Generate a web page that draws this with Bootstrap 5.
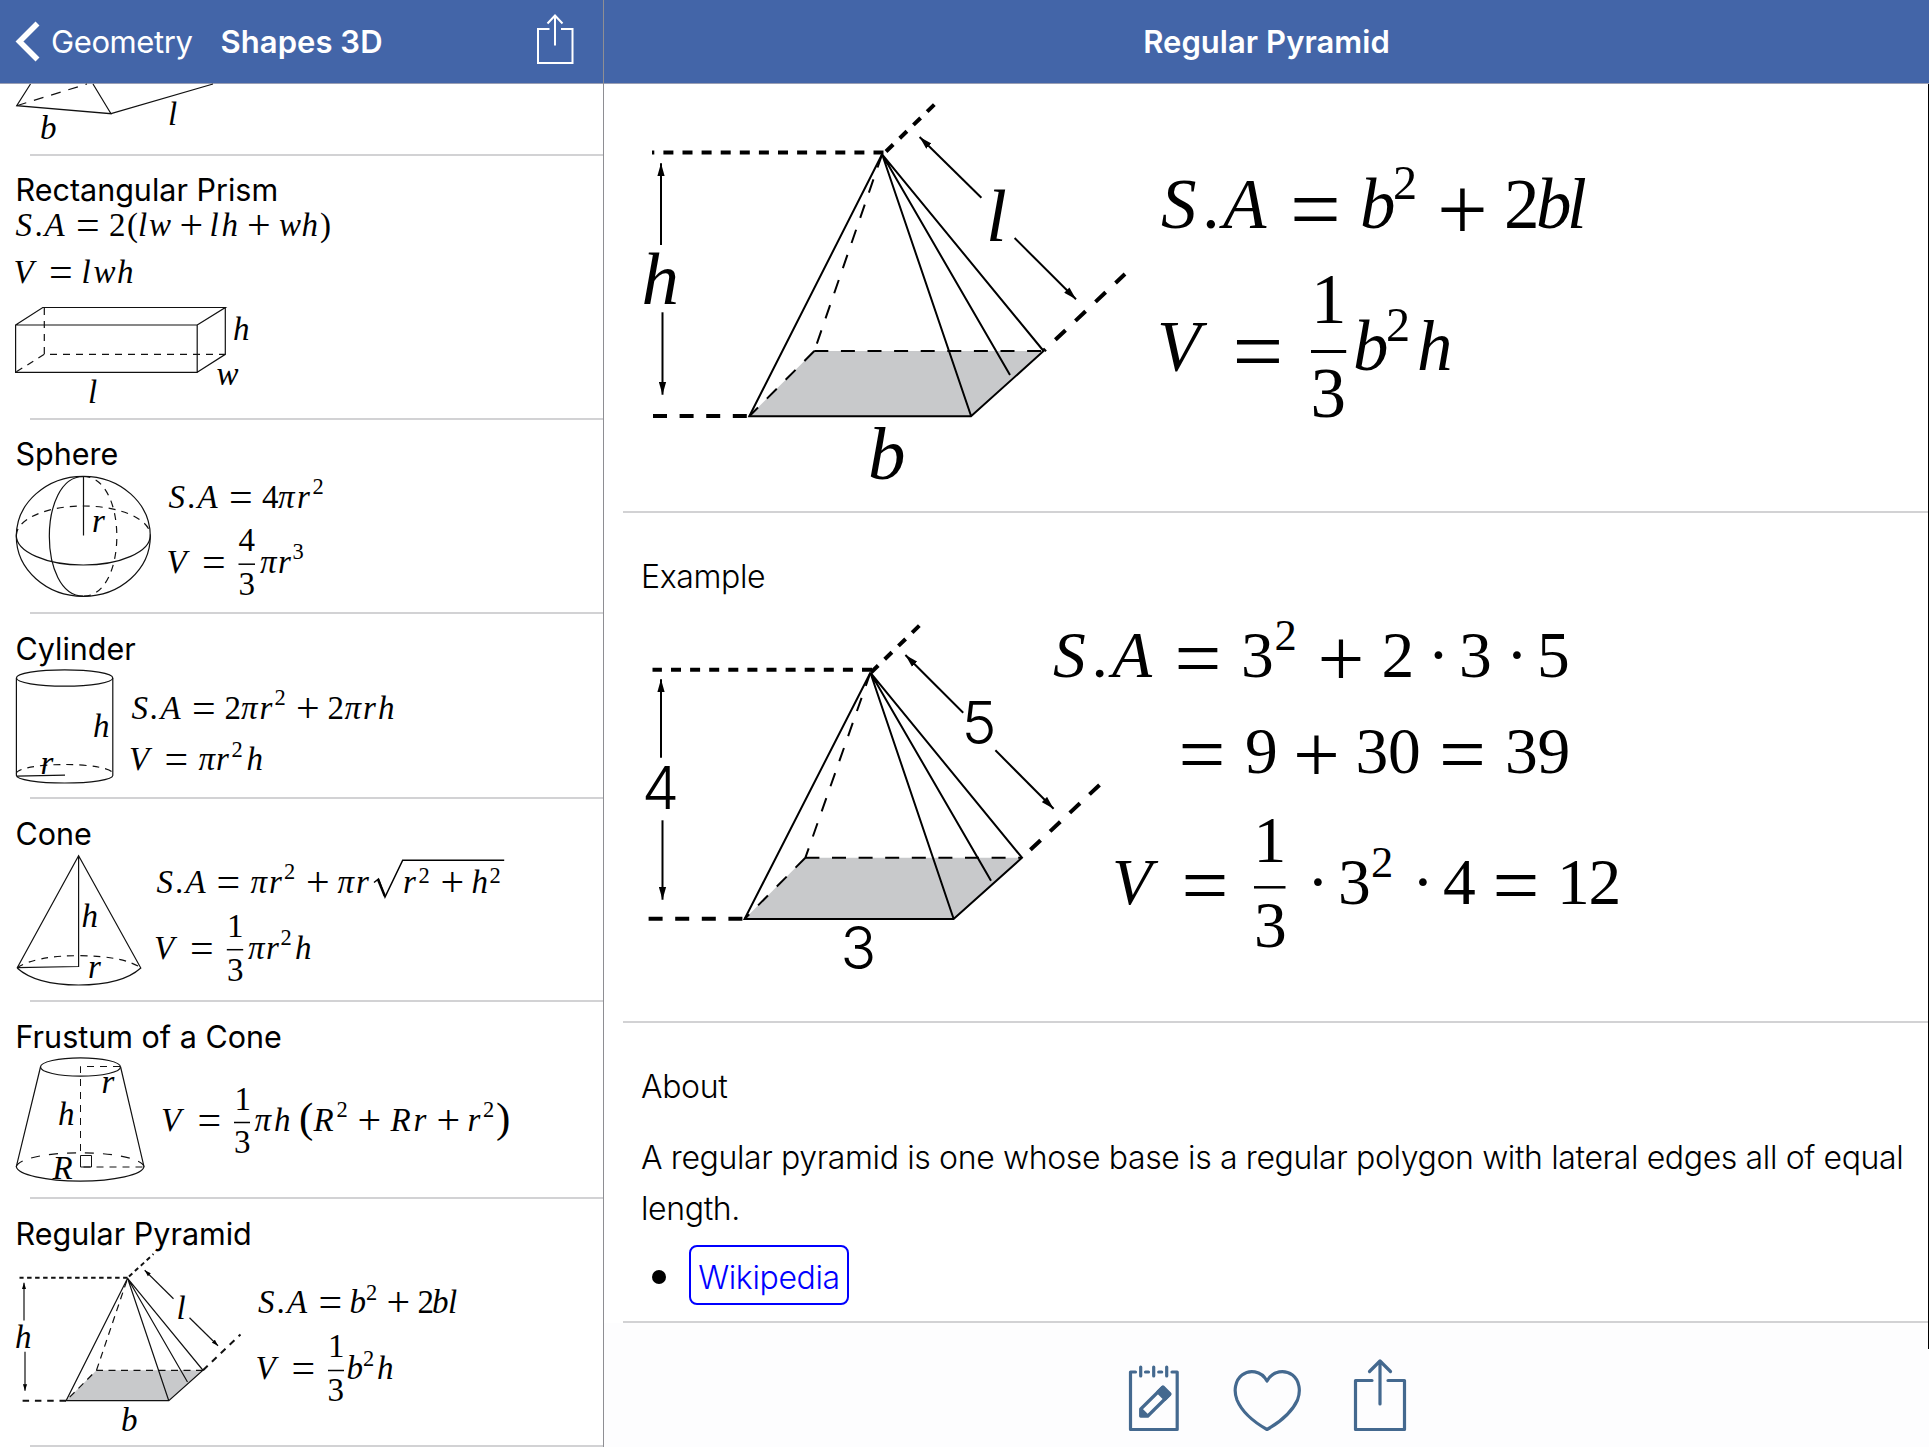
<!DOCTYPE html>
<html lang="en">
<head>
<meta charset="utf-8">
<meta name="viewport" content="width=device-width, initial-scale=1">
<title>Shapes 3D – Regular Pyramid</title>
<link href="https://cdn.jsdelivr.net/npm/bootstrap@5.3.0/dist/css/bootstrap.min.css" rel="stylesheet">
<style>
  body { width: 1929px; height: 1447px; background: #fff; color: #000; font-family: Inter, "Liberation Sans", sans-serif; overflow: hidden; }
  .pane-list { width: 604px; border-right: 1px solid #8e8e93; }
  .topbar { height: 84px; background: #4365a8; border-bottom: 1px solid #9a9fb4; color: #fff; font-size: 31px; line-height: 83px; flex: none; white-space: nowrap; }
  .topbar a { color: #fff; letter-spacing: -.4px; }
  .topbar h1 { font-size: 31px; font-weight: 600; line-height: inherit; letter-spacing: .05px; }
  .cell-title { font-size: 30.5px; font-weight: 400; height: 52px; line-height: 38px; padding: 16px 0 0 15.5px; letter-spacing: 0; margin: 0; white-space: nowrap; }
  .cell-title.up { padding-top: 15px; }
  .rule { height: 2px; background: #d2d2d4; flex: none; }
  .rule-list { margin-left: 30px; }
  .rule-detail { margin-left: 19px; }
  svg { display: block; overflow: visible; }
  .fig { stroke: #111; stroke-width: 1.2; fill: none; }
  .fig-lg { stroke: #000; stroke-width: 2; fill: none; }
  .dash { stroke-dasharray: 7 6; }
  .m { font: italic 33px "Liberation Serif", serif; fill: #000; stroke: none; transform: translateY(.6px); }
  .m tspan { font-style: normal; }
  .m .i { font-style: italic; }
  .m .o { font-size: 1.27em; }
  .m .e { font-size: .68em; }
  .m.lbl { font-size: 75px; }
  .lg { font-size: 71px; }
  .md { font-size: 65.5px; }
  .num { font: 300 59px Inter, "Liberation Sans", sans-serif; fill: #000; stroke: none; }
  .detail { font-family: Inter, "Liberation Sans", sans-serif; font-weight: 300; font-size: 32px; letter-spacing: -.37px; line-height: 51px; padding-left: 37px; }
  .detail h2 { font-size: 32px; font-weight: 300; line-height: 31px; margin: 0; padding-top: 48px; }
  .detail p { margin: 0; padding-top: 30px; white-space: nowrap; }
  .link-row { padding: 11px 0 0 11px; gap: 23px; }
  .dot { width: 14px; height: 14px; margin-top: 4px; border-radius: 50%; background: #000; }
  .wiki { border: 2px solid #00f; border-radius: 8px; color: #00f; height: 60px; width: 160px; line-height: 61px; }
  .about { height: 298px; }
  .tools { height: 124px; background: #fdfdfe; }
  .edge { position: absolute; right: 0; top: 84px; width: 1px; height: 1265px; background: #000; }
</style>
<script src="https://cdn.jsdelivr.net/npm/bootstrap@5.3.0/dist/js/bootstrap.bundle.min.js"></script>
</head>
<body class="d-flex position-relative">

<svg width="0" height="0" class="position-absolute" aria-hidden="true">
  <defs>
    <marker id="tip" markerUnits="userSpaceOnUse" markerWidth="14" markerHeight="8" refX="13" refY="4" orient="auto"><path d="M0 .3L13 4L0 7.7z" fill="#000"/></marker>
    <marker id="tip-sm" markerUnits="userSpaceOnUse" markerWidth="7" markerHeight="5" refX="6.5" refY="2.5" orient="auto"><path d="M0 .4L6.5 2.5L0 4.6z" fill="#000"/></marker>
  </defs>
</svg>

<aside class="pane-list d-flex flex-column flex-shrink-0">
  <header class="topbar d-flex align-items-center">
    <a href="#" class="d-flex align-items-center text-decoration-none">
      <svg width="51" height="83" viewBox="0.5 0 51 83"><path d="M38 23.5L20 41.5L38 59.5" fill="none" stroke="#fff" stroke-width="5.6"/></svg>
      Geometry</a>
    <h1 class="m-0 ps-4 ms-1">Shapes 3D</h1>
    <svg class="ms-auto" width="68" height="83" viewBox="535 0 68 83" fill="none" stroke="#fff" stroke-width="2"><path d="M549.5 29H538V63H572.5V29H561M555 45.5V15.5M547.5 23.5L555 15.5L562.5 23.5"/></svg>
  </header>

  <div>
    <svg width="603" height="70" viewBox="0 84 603 70">
      <g class="fig"><path d="M30.5 84L16.7 105.7L111 113.7L93 84M111 113.7L213 84"/><path stroke-dasharray="10 8" d="M16.7 105.7L87 84"/></g>
      <text class="m" x="40" y="138">b</text><text class="m" x="168" y="124.3">l</text>
    </svg>
    <div class="rule rule-list"></div>
  </div>

  <div>
    <h2 class="cell-title up">Rectangular Prism</h2>
    <svg width="603" height="210" viewBox="0 208 603 210">
      <text class="m" y="235.5"><tspan class="i" x="15.5">S</tspan><tspan x="34.5">.</tspan><tspan class="i" x="44.5">A</tspan><tspan class="o" x="76" dy="3">=</tspan><tspan x="109" y="235.5">2</tspan><tspan x="127">(</tspan><tspan class="i" x="138 149">lw</tspan><tspan class="o" x="179.5" dy="3">+</tspan><tspan class="i" x="209.5 221.5" y="235.5">lh</tspan><tspan class="o" x="247" dy="3">+</tspan><tspan class="i" x="279 301.5" y="235.5">wh</tspan><tspan x="320">)</tspan></text>
      <text class="m" y="282.5"><tspan class="i" x="13.5">V</tspan><tspan class="o" x="49" dy="3">=</tspan><tspan class="i" x="81.5 93.5 117" y="282.5">lwh</tspan></text>
      <g class="fig"><path d="M15.6 325H197.2V372.3H15.6ZM15.6 325L42.8 307.5H225.3L197.2 325M225.3 307.5V354.3L197.2 372.3"/><path class="dash" d="M44.3 308V354.3H225.3M44.3 354.3L15.6 372.3"/></g>
      <text class="m" x="233" y="339.3">h</text><text class="m" x="216.5" y="384.3">w</text><text class="m" x="88" y="402.5">l</text>
    </svg>
    <div class="rule rule-list"></div>
  </div>

  <div>
    <h2 class="cell-title up">Sphere</h2>
    <svg width="603" height="140" viewBox="0 471.5 603 140">
      <g class="fig"><ellipse cx="83.3" cy="535.8" rx="67" ry="60"/><path d="M16.3 535A67 29.5 0 0 0 150.3 535M83.3 476C38 476 38 595.7 83.3 595.7M83.5 476V535"/><path class="dash" d="M16.3 535A67 29.5 0 0 1 150.3 535M83.3 476C128 476 128 595.7 83.3 595.7"/></g>
      <text class="m" x="92" y="531">r</text>
      <text class="m" y="506.5"><tspan class="i" x="168.5">S</tspan><tspan x="187">.</tspan><tspan class="i" x="197.5">A</tspan><tspan class="o" x="229" dy="3">=</tspan><tspan x="262" y="506.5">4</tspan><tspan class="i" x="278 297">πr</tspan><tspan class="e" x="312.5" y="492.5">2</tspan></text>
      <text class="m" y="572.3"><tspan class="i" x="166.5">V</tspan><tspan class="o" x="202" dy="3">=</tspan><tspan x="238.5" y="550">4</tspan><tspan x="238.5" y="594">3</tspan><tspan class="i" x="260 278" y="572.3">πr</tspan><tspan class="e" x="292.5" y="558.3">3</tspan></text>
      <path d="M238.5 563.7H255" stroke="#000" stroke-width="1.5"/>
    </svg>
    <div class="rule rule-list"></div>
  </div>

  <div>
    <h2 class="cell-title">Cylinder</h2>
    <svg width="603" height="131" viewBox="0 665.5 603 131">
      <g class="fig"><ellipse cx="64.6" cy="677.5" rx="48.2" ry="8.2"/><path d="M16.4 677.5V775A48.2 7.5 0 0 0 112.8 775V677.5M16.4 775.6L65 774.7"/><path class="dash" d="M16.4 773A48.2 9 0 0 1 112.8 773"/></g>
      <text class="m" x="40.5" y="772.5">r</text><text class="m" x="93" y="736">h</text>
      <text class="m" y="718.3"><tspan class="i" x="131.5">S</tspan><tspan x="149.5">.</tspan><tspan class="i" x="160.5">A</tspan><tspan class="o" x="192" dy="3">=</tspan><tspan x="224.5" y="718.3">2</tspan><tspan class="i" x="241 259.5">πr</tspan><tspan class="e" x="274.5" y="704.3">2</tspan><tspan class="o" x="296" y="721.3">+</tspan><tspan x="327.5" y="718.3">2</tspan><tspan class="i" x="344.5 363 378">πrh</tspan></text>
      <text class="m" y="769.3"><tspan class="i" x="129">V</tspan><tspan class="o" x="164.5" dy="3">=</tspan><tspan class="i" x="198.5 216" y="769.3">πr</tspan><tspan class="e" x="231.5" y="756">2</tspan><tspan class="i" x="246.5" y="769.3">h</tspan></text>
    </svg>
    <div class="rule rule-list"></div>
  </div>

  <div>
    <h2 class="cell-title">Cone</h2>
    <svg width="603" height="149" viewBox="0 851 603 149">
      <g class="fig"><path d="M17.1 968L78.6 855.7L140.8 968Q122 985 78.6 985Q36 985 17.1 968M78.6 855.7V966.5L17.1 967.7"/><path class="dash" d="M17.1 967.7Q36 955.7 78.6 955.7Q122 955.7 140.8 967.7"/></g>
      <text class="m" x="81.5" y="926.5">h</text><text class="m" x="88" y="977.5">r</text>
      <text class="m" y="892.7"><tspan class="i" x="156.5">S</tspan><tspan x="175">.</tspan><tspan class="i" x="185.5">A</tspan><tspan class="o" x="216.5" dy="3">=</tspan><tspan class="i" x="250.5 269" y="892.7">πr</tspan><tspan class="e" x="284" y="878.7">2</tspan><tspan class="o" x="306" y="895.7">+</tspan><tspan class="i" x="337.5 356" y="892.7">πr</tspan><tspan class="i" x="403">r</tspan><tspan class="e" x="418.5" y="882.3">2</tspan><tspan class="o" x="440.5" y="895.7">+</tspan><tspan class="i" x="471.5" y="892.7">h</tspan><tspan class="e" x="489.5" y="882.3">2</tspan></text>
      <path d="M374 882.5L378.5 879L385 897L402.7 860.2H504.2" fill="none" stroke="#000" stroke-width="1.5"/><path d="M378 879.5L384.8 896" stroke="#000" stroke-width="2.4"/>
      <text class="m" y="958.3"><tspan class="i" x="154">V</tspan><tspan class="o" x="190" dy="3">=</tspan><tspan x="227" y="936.3">1</tspan><tspan x="227" y="980.3">3</tspan><tspan class="i" x="248 266" y="958.3">πr</tspan><tspan class="e" x="280.5" y="944.7">2</tspan><tspan class="i" x="295" y="958.3">h</tspan></text>
      <path d="M226.8 949.7H243.2" stroke="#000" stroke-width="1.5"/>
    </svg>
    <div class="rule rule-list"></div>
  </div>

  <div>
    <h2 class="cell-title">Frustum of a Cone</h2>
    <svg width="603" height="143" viewBox="0 1054 603 143">
      <g class="fig"><ellipse cx="80.5" cy="1067" rx="40" ry="9.2"/><path d="M40.5 1067L16.3 1166.7A63.9 15 0 0 0 144 1166.7L120.6 1067"/><path stroke-dasharray="9 9" d="M16.3 1166.7A63.9 14.5 0 0 1 144 1166.7"/><g stroke-width="1"><path class="dash" d="M120 1066.5H80.5V1167H144"/><path d="M80.5 1155.5H91.5V1167H80.5Z"/></g></g>
      <text class="m" x="58" y="1124">h</text><text class="m" x="101.5" y="1092.5">r</text><text class="m" x="52.5" y="1178">R</text>
      <text class="m" y="1130"><tspan class="i" x="161">V</tspan><tspan class="o" x="197.5" dy="3">=</tspan><tspan x="234.5" y="1109">1</tspan><tspan x="234" y="1152.3">3</tspan><tspan class="i" x="254.5 274" y="1130">πh</tspan><tspan x="299" y="1131" font-size="43">(</tspan><tspan class="i" x="313.5" y="1130">R</tspan><tspan class="e" x="336.5" y="1116.7">2</tspan><tspan class="o" x="357.5" y="1133">+</tspan><tspan class="i" x="390.5 413.5" y="1130">Rr</tspan><tspan class="o" x="436.5" y="1133">+</tspan><tspan class="i" x="467.5" y="1130">r</tspan><tspan class="e" x="483" y="1116.7">2</tspan><tspan x="496" y="1131" font-size="43">)</tspan></text>
      <path d="M234 1122.5H250" stroke="#000" stroke-width="1.5"/>
    </svg>
    <div class="rule rule-list"></div>
  </div>

  <div>
    <h2 class="cell-title">Regular Pyramid</h2>
    <svg width="603" height="194" viewBox="0 1251 603 194">
      <path d="M66.1 1400.7H168.8L203 1370.3H96.5Z" fill="#c8c9cb"/>
      <g class="fig"><path d="M127.6 1278.3L66.1 1400.7H168.8L203 1370.3L127.6 1278.3L168.8 1400.7M127.6 1278.3L187.5 1382"/><path stroke-dasharray="7 5.5" d="M203 1370.3H96.5L66.1 1400.7M96.5 1370.3L127.6 1278.3"/>
        <g stroke-width="2"><path stroke-dasharray="4.5 3.5" d="M127.6 1277.7H19.5M129 1276.5L153.5 1254"/><path stroke-dasharray="6.5 5.8" d="M66 1400.7H20M203 1370.3L240.5 1334.5"/></g>
        <path marker-end="url(#tip-sm)" d="M24 1320.5V1282.7"/><path marker-end="url(#tip-sm)" d="M25 1351.7V1390.7"/><path marker-end="url(#tip-sm)" d="M173.5 1298.7L144.7 1270.3"/><path marker-end="url(#tip-sm)" d="M189.5 1317.7L218 1345.7"/></g>
      <text class="m" x="15" y="1347.7">h</text><text class="m" x="176.5" y="1318.3">l</text><text class="m" x="121" y="1430">b</text>
      <text class="m" y="1312.7"><tspan class="i" x="258">S</tspan><tspan x="276.5">.</tspan><tspan class="i" x="287">A</tspan><tspan class="o" x="318.5" dy="3">=</tspan><tspan class="i" x="349.5" y="1312.7">b</tspan><tspan class="e" x="366" y="1299">2</tspan><tspan class="o" x="386.5" y="1315.7">+</tspan><tspan x="417.5" y="1312.7">2</tspan><tspan class="i" x="432 448">bl</tspan></text>
      <text class="m" y="1378.3"><tspan class="i" x="255.5">V</tspan><tspan class="o" x="291.5" dy="3">=</tspan><tspan x="328" y="1356.7">1</tspan><tspan x="327.5" y="1400.3">3</tspan><tspan class="i" x="346.5" y="1378.3">b</tspan><tspan class="e" x="363" y="1365.7">2</tspan><tspan class="i" x="377" y="1378.3">h</tspan></text>
      <path d="M328 1370.5H344" stroke="#000" stroke-width="1.5"/>
    </svg>
    <div class="rule rule-list"></div>
  </div>
</aside>

<main class="d-flex flex-column flex-fill">
  <header class="topbar text-center"><h1 class="m-0">Regular Pyramid</h1></header>

  <section>
    <svg width="1325" height="427" viewBox="604 84 1325 427">
      <path d="M749.3 416.3H971L1043.6 351H814.3Z" fill="#c8c9cb"/>
      <g class="fig-lg"><path d="M882.1 154.3L749.3 416.3H971L1043.6 351L882.1 154.3L971 415.7M882.1 154.3L1010 375"/>
        <path stroke-dasharray="14 12.6" d="M814.3 351H1043.6M814.3 351L749.3 416.3M882.1 154.3L814.3 351"/>
        <g stroke-width="4"><path stroke-dasharray="10 9.1" d="M883.5 152.5H652M886 151.5L935 104"/><path stroke-dasharray="14 12.6" d="M653 416H750"/><path stroke-dasharray="14 13.6" stroke-dashoffset="12" d="M1044 350.5L1125 274"/></g>
        <path marker-end="url(#tip)" d="M661 245V163.3"/><path marker-end="url(#tip)" d="M662.5 312.3V394.7"/><path marker-end="url(#tip)" d="M981.4 197.7L919.6 137"/><path marker-end="url(#tip)" d="M1014.6 238L1076 299.3"/></g>
      <text class="m lbl" x="641.5" y="303">h</text><text class="m lbl" x="986" y="240.5">l</text><text class="m lbl" x="868" y="478">b</text>
      <text class="m lg" y="227"><tspan class="i" x="1161">S</tspan><tspan x="1202">.</tspan><tspan class="i" x="1223">A</tspan><tspan class="o" x="1290" y="239">=</tspan><tspan class="i" x="1360" y="227">b</tspan><tspan class="e" x="1393" y="198.5">2</tspan><tspan class="o" x="1437" y="239">+</tspan><tspan x="1504" y="227">2</tspan><tspan class="i" x="1536 1567">bl</tspan></text>
      <text class="m lg" y="369"><tspan class="i" x="1157">V</tspan><tspan class="o" x="1232.5" y="381">=</tspan><tspan x="1311" y="322.3">1</tspan><tspan x="1310.5" y="416">3</tspan><tspan class="i" x="1353" y="369">b</tspan><tspan class="e" x="1386" y="340">2</tspan><tspan class="i" x="1417" y="369">h</tspan></text>
      <path d="M1311 351.5H1346.2" stroke="#000" stroke-width="3"/>
    </svg>
    <div class="rule rule-detail"></div>
  </section>

  <section>
    <div class="detail"><h2>Example</h2></div>
    <svg width="1325" height="429" viewBox="604 592 1325 429">
      <path d="M744.6 919H953.6L1022 857.7H805.4Z" fill="#c8c9cb"/>
      <g class="fig-lg"><path d="M870.4 672.7L744.6 919H953.6L1022 857.7L870.4 672.7L953.6 918.7M870.4 672.7L991 880.7"/>
        <path stroke-dasharray="14 12.6" d="M805.4 857.7H1022M805.4 857.7L744.6 919M870.4 672.7L805.4 857.7"/>
        <g stroke-width="4"><path stroke-dasharray="10 9.1" d="M872 669.7H652.5M871 672.5L920 625"/><path stroke-dasharray="14 12.6" d="M648.6 918.7H744"/><path stroke-dasharray="14 13" stroke-dashoffset="15.5" d="M1022 857.7L1099.5 785"/></g>
        <path marker-end="url(#tip)" d="M661 757.7V679.3"/><path marker-end="url(#tip)" d="M662.5 820.3V899.7"/><path marker-end="url(#tip)" d="M963.2 712.7L905.4 655"/><path marker-end="url(#tip)" d="M995.4 750.3L1053.6 808.7"/></g>
      <text class="num" x="642" y="808.5">4</text><text class="num" x="961.5" y="744">5</text><text class="num" x="840.5" y="968.5">3</text>
      <text class="m md" y="676"><tspan class="i" x="1053">S</tspan><tspan x="1091.5">.</tspan><tspan class="i" x="1112">A</tspan><tspan class="o" x="1174.5" y="685.5">=</tspan><tspan x="1241" y="676">3</tspan><tspan class="e" x="1274.5" y="649">2</tspan><tspan class="o" x="1317.5" y="685.5">+</tspan><tspan x="1381.5" y="676">2</tspan><tspan x="1427.5">·</tspan><tspan x="1459">3</tspan><tspan x="1506">·</tspan><tspan x="1537">5</tspan></text>
      <text class="m md" y="772"><tspan class="o" x="1178.5" y="781.5">=</tspan><tspan x="1245" y="772">9</tspan><tspan class="o" x="1293" y="781.5">+</tspan><tspan x="1355.5 1388" y="772">30</tspan><tspan class="o" x="1439" y="781.5">=</tspan><tspan x="1505 1537.5" y="772">39</tspan></text>
      <text class="m md" y="903"><tspan class="i" x="1112">V</tspan><tspan class="o" x="1181.5" y="912">=</tspan><tspan x="1253.5" y="861">1</tspan><tspan x="1254" y="946">3</tspan><tspan x="1307" y="903">·</tspan><tspan x="1338">3</tspan><tspan class="e" x="1371" y="876.5">2</tspan><tspan x="1412" y="903">·</tspan><tspan x="1443">4</tspan><tspan class="o" x="1492.5" y="912">=</tspan><tspan x="1557 1588.5" y="903">12</tspan></text>
      <path d="M1254 887.3H1285.5" stroke="#000" stroke-width="2.5"/>
    </svg>
    <div class="rule rule-detail"></div>
  </section>

  <section>
    <div class="detail about">
      <h2>About</h2>
      <p>A regular pyramid is one whose base is a regular polygon with lateral edges all of equal<br>length.</p>
      <div class="link-row d-flex align-items-center"><span class="dot"></span><a class="wiki text-decoration-none text-center" href="#">Wikipedia</a></div>
    </div>
    <div class="rule rule-detail"></div>
  </section>

  <footer class="tools">
    <svg width="1325" height="124" viewBox="604 1323 1325 124" fill="none" stroke="#44698f" stroke-width="3.2" stroke-linecap="round" stroke-linejoin="round">
      <path d="M1135.5 1372H1130.5V1429.5H1177.2V1372H1172M1140.7 1367V1376M1153.7 1367V1376M1166.7 1367V1376M1145.5 1372H1148.5M1158.7 1372H1161.7"/>
      <path d="M1140.8 1409L1162.5 1387.5L1169.5 1394.5L1147.8 1416H1140.8Z"/><path d="M1158 1392L1163 1387L1170 1394L1165 1399ZM1141 1409.5L1147.5 1416H1141Z" fill="#44698f"/>
      <path d="M1267 1381C1261 1370 1249 1369.5 1242 1375C1235 1380.5 1233.5 1391 1237 1400C1242 1412 1253 1421.5 1267 1429.5C1281 1421.5 1292 1412 1297.5 1400C1301 1391 1299.5 1380.5 1292.5 1375C1285 1369.5 1273 1370 1267 1381Z"/>
      <path d="M1372 1380.5H1355.5V1429.5H1404.5V1380.5H1388M1380 1404V1361M1369.5 1371.5L1380 1361L1390.5 1371.5"/>
    </svg>
  </footer>
</main>
<div class="edge"></div>
</body>
</html>
